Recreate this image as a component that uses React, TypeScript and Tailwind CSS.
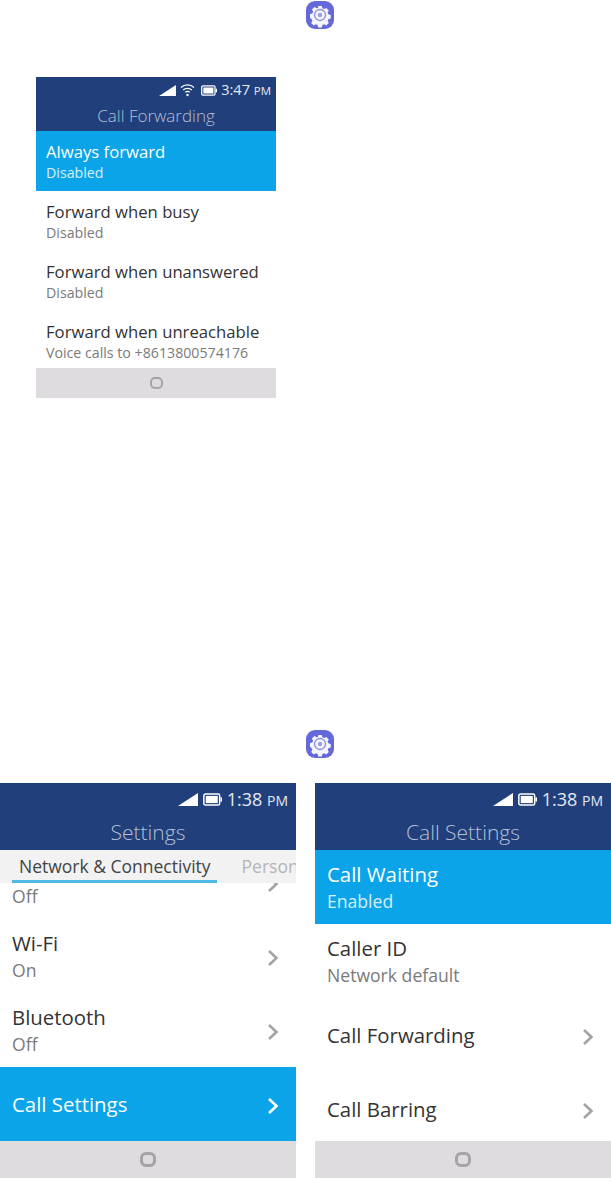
import React from 'react';

const Gear = () => (
  <svg width="30" height="30" viewBox="0 0 30 30" className="block">
    <rect x="1" y="1" width="28" height="28" rx="9" fill="#6468d8" />
    <path
      d="M13 5h4l.7 2.6 1.9.8 2.4-1.3 2.8 2.8-1.3 2.4.8 1.9 2.6.7v4l-2.6.7-.8 1.9 1.3 2.4-2.8 2.8-2.4-1.3-1.9.8-.7 2.6h-4l-.7-2.6-1.9-.8-2.4 1.3-2.8-2.8 1.3-2.4-.8-1.9L3.9 18v-4l2.6-.7.8-1.9-1.3-2.4 2.8-2.8 2.4 1.3 1.9-.8z"
      fill="#f4f4fb"
      transform="translate(1.500 1.500) scale(.9)"
    />
    <circle cx="15" cy="15" r="5.500" fill="none" stroke="#8a8de0" strokeWidth="1.300" />
    <circle cx="15" cy="15" r="2.200" fill="#9a9de6" />
  </svg>
);

const Chevron = ({ white = false }: { white?: boolean }) => (
  <svg width="12" height="18" viewBox="0 0 12 18" className="shrink-0 mt-[3px]">
    <path d="M2 2l7.500 7L2 16" fill="none" stroke={white ? '#ffffff' : '#a3a3a3'} strokeWidth="2.600" />
  </svg>
);

const StatusBar = ({ time, wifi = false, big = false }: { time: string; wifi?: boolean; big?: boolean }) => (
  <div className={big ? 'flex items-center justify-end h-[32px] pr-[8px] gap-[5px]' : 'flex items-center justify-end h-[26px] pr-[5px] gap-[4px]'}>
    <svg width={big ? 20 : 17} height={big ? 13 : 11} viewBox="0 0 20 13">
      <path d="M0 13L20 0v13z" fill="#fff" />
    </svg>
    {wifi && (
      <svg width="15" height="14" viewBox="0 0 15 14" fill="none" stroke="#fff" strokeWidth="1.200">
        <path d="M1 4.500c3.600-3.400 9.400-3.400 13 0" />
        <path d="M3.200 7c2.400-2.200 6.200-2.200 8.600 0" />
        <path d="M5.300 9.300c1.300-1.100 3.100-1.100 4.400 0" />
        <circle cx="7.500" cy="12" r="1.200" fill="#fff" stroke="none" />
      </svg>
    )}
    <svg width={big ? 19 : 16} height={big ? 13 : 11} viewBox="0 0 18 12" className={wifi ? 'ml-[2px]' : ''}>
      <rect x=".8" y=".8" width="15" height="10.400" rx="1.500" fill="none" stroke="#fff" strokeWidth="1.400" />
      <rect x="2.600" y="2.600" width="11.400" height="6.800" fill="#fff" />
      <rect x="16.500" y="4" width="1.500" height="4" fill="#fff" />
    </svg>
    <span className={big ? 'text-[18px] text-[#e3e8f1]' : 'text-[14.500px] text-[#e3e8f1]'}>
      {time} <span className={big ? 'text-[14px]' : 'text-[11.500px]'}>PM</span>
    </span>
  </div>
);

const NavBar = ({ big = false }: { big?: boolean }) => (
  <div className={big ? 'h-[37px] shrink-0 bg-[#dfdcdf] flex items-center justify-center' : 'h-[30px] shrink-0 bg-[#dfdcdf] flex items-center justify-center'}>
    <div className={big ? 'w-[16px] h-[15px] rounded-[6px] border-[3px] border-[#a5a3a5]' : 'w-[13px] h-[12px] rounded-[5px] border-[2px] border-[#a5a3a5]'} />
  </div>
);

const SmallRow = ({ title, sub, active = false }: { title: string; sub: string; active?: boolean }) => (
  <div className={active ? 'h-[60px] shrink-0 px-[10px] pt-[10px] bg-[#0ba4e8]' : 'h-[60px] shrink-0 px-[10px] pt-[10px]'}>
    <div className={active ? 'text-[16.700px] leading-[22px] text-white whitespace-nowrap' : 'text-[16.700px] leading-[22px] text-[#333333] whitespace-nowrap'}>{title}</div>
    <div className={active ? 'text-[14.200px] leading-[20px] text-[#d6f0fc] whitespace-nowrap' : 'text-[14.200px] leading-[20px] text-[#7a7a7a] whitespace-nowrap'}>{sub}</div>
  </div>
);

const BigRow = ({ title, sub, active = false, chevron = false }: { title: string; sub?: string; active?: boolean; chevron?: boolean }) => (
  <div className={active ? 'h-[74px] shrink-0 pl-[12px] pr-[17px] flex items-center justify-between bg-[#0ba4e8]' : 'h-[74px] shrink-0 pl-[12px] pr-[17px] flex items-center justify-between'}>
    <div>
      <div className={active ? 'text-[20.400px] leading-[28px] text-white' : 'text-[20.400px] leading-[28px] text-[#333333]'}>{title}</div>
      {sub && (
        <div className={active ? 'mt-[1px] text-[17.600px] leading-[25px] text-[#d6f0fc]' : 'mt-[1px] text-[17.600px] leading-[25px] text-[#7a7a7a]'}>{sub}</div>
      )}
    </div>
    {chevron && <Chevron white={active} />}
  </div>
);

export default function App() {
  return (
    <div className="w-[611px] h-[1178px] bg-white overflow-hidden font-['Open_Sans',sans-serif]">
      <div className="flex justify-center pl-[29px] pt-[0px]">
        <Gear />
      </div>

      {/* Call Forwarding */}
      <div className="mt-[47px] ml-[36px] w-[240px] h-[321px] flex flex-col overflow-hidden">
        <div className="h-[54px] shrink-0 bg-[#21407b]">
          <StatusBar time="3:47" wifi />
          <div className="text-center text-[17px] font-light leading-[26px] text-[#b4bfd5]">Call Forwarding</div>
        </div>
        <div className="flex-1 overflow-hidden">
          <SmallRow title="Always forward" sub="Disabled" active />
          <SmallRow title="Forward when busy" sub="Disabled" />
          <SmallRow title="Forward when unanswered" sub="Disabled" />
          <SmallRow title="Forward when unreachable" sub="Voice calls to +8613800574176" />
        </div>
        <NavBar />
      </div>

      <div className="flex justify-center pl-[29px] mt-[331px]">
        <Gear />
      </div>

      <div className="mt-[24px] flex justify-between">
        {/* Settings */}
        <div className="w-[296px] h-[395px] flex flex-col overflow-hidden">
          <div className="h-[67px] shrink-0 bg-[#21407b]">
            <StatusBar time="1:38" big />
            <div className="text-center text-[21px] font-light leading-[35px] text-[#b4bfd5]">Settings</div>
          </div>
          <div className="relative z-10 h-[33px] shrink-0 bg-[#f2f2f2] flex pl-[19px] gap-[31px] whitespace-nowrap overflow-hidden">
            <span className="text-[17.500px] leading-[32px] text-[#444444]">Network &amp; Connectivity</span>
            <span className="text-[17.500px] leading-[32px] text-[#b5b5b5]">Personalization</span>
            <div className="absolute left-[12px] bottom-0 w-[205px] h-[3px] bg-[#4fb8e4]" />
          </div>
          <div className="flex-1 overflow-hidden">
            <div className="-mt-[38px]">
              <BigRow title="Cellular Network" sub="Off" chevron />
              <BigRow title="Wi-Fi" sub="On" chevron />
              <BigRow title="Bluetooth" sub="Off" chevron />
              <BigRow title="Call Settings" active chevron />
            </div>
          </div>
          <NavBar big />
        </div>

        {/* Call Settings */}
        <div className="w-[296px] h-[395px] flex flex-col overflow-hidden">
          <div className="h-[67px] shrink-0 bg-[#21407b]">
            <StatusBar time="1:38" big />
            <div className="text-center text-[21px] font-light leading-[35px] text-[#b4bfd5]">Call Settings</div>
          </div>
          <div className="flex-1 overflow-hidden">
            <BigRow title="Call Waiting" sub="Enabled" active />
            <BigRow title="Caller ID" sub="Network default" />
            <BigRow title="Call Forwarding" chevron />
            <BigRow title="Call Barring" chevron />
          </div>
          <NavBar big />
        </div>
      </div>
    </div>
  );
}
